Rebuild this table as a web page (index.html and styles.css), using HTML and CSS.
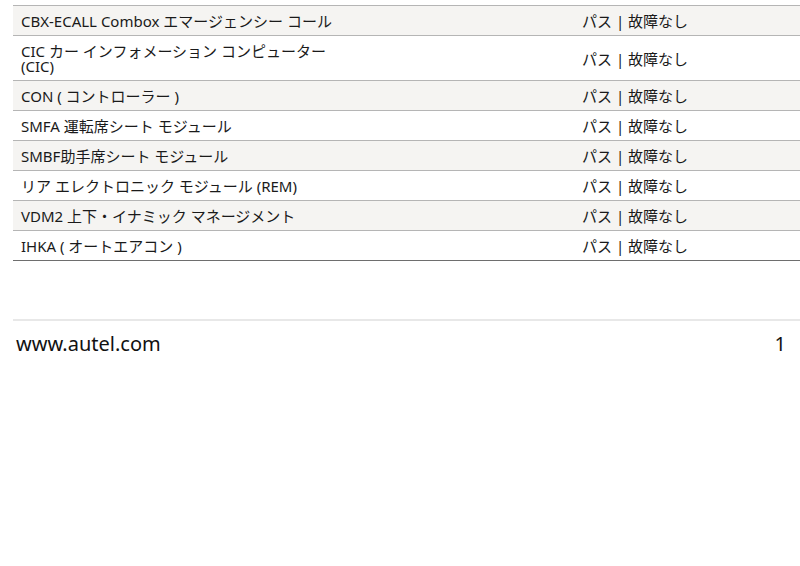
FILE: index.html
```html
<!DOCTYPE html>
<html lang="ja">
<head>
  <meta charset="UTF-8">
  <meta name="viewport" content="width=device-width, initial-scale=1.0">
  <title>Report</title>
  <link rel="stylesheet" href="styles.css">
</head>
<body>

<div class="report">
  <div class="row">
    <div class="name">CBX-ECALL Combox エマージェンシー コール</div>
    <div class="status">パス | 故障なし</div>
  </div>
  <div class="row">
    <div class="name">CIC カー インフォメーション コンピューター (CIC)</div>
    <div class="status">パス | 故障なし</div>
  </div>
  <div class="row">
    <div class="name">CON ( コントローラー )</div>
    <div class="status">パス | 故障なし</div>
  </div>
  <div class="row">
    <div class="name">SMFA 運転席シート モジュール</div>
    <div class="status">パス | 故障なし</div>
  </div>
  <div class="row">
    <div class="name">SMBF助手席シート モジュール</div>
    <div class="status">パス | 故障なし</div>
  </div>
  <div class="row">
    <div class="name">リア エレクトロニック モジュール (REM)</div>
    <div class="status">パス | 故障なし</div>
  </div>
  <div class="row">
    <div class="name">VDM2 上下・イナミック マネージメント</div>
    <div class="status">パス | 故障なし</div>
  </div>
  <div class="row">
    <div class="name">IHKA ( オートエアコン )</div>
    <div class="status">パス | 故障なし</div>
  </div>
</div>

<div class="footer">
  <span>www.autel.com</span>
  <span>1</span>
</div>

</body>
</html>
```

FILE: styles.css
```css
* {
  box-sizing: border-box;
}

body {
  margin: 0;
  padding: 5px 0 0 13px;
  font-family: 'Noto Sans', 'Noto Sans CJK JP', sans-serif;
  background-color: white;
  color: #1a1a1a;
  overflow: hidden;
}

.report {
  border-top: 1px solid #b5b5b5;
  border-bottom: 1px solid #6e6e6e;
}

.row {
  display: grid;
  grid-template-columns: 561px 1fr;
  align-items: center;
  padding: 8px 8px 6px 8px;
  font-size: 15px;
  line-height: 15px;
  border-bottom: 1px solid #b5b5b5;
}

.row:last-child {
  border-bottom: none;
}

.row:nth-child(odd) {
  background-color: #f5f4f2;
}

.name {
  max-width: 320px;
}

.footer {
  margin-top: 58px;
  border-top: 2px solid #e8e8e8;
  display: flex;
  justify-content: space-between;
  padding: 10px 14px 0 3px;
  font-size: 20px;
  line-height: 26px;
  color: #111;
}
```
